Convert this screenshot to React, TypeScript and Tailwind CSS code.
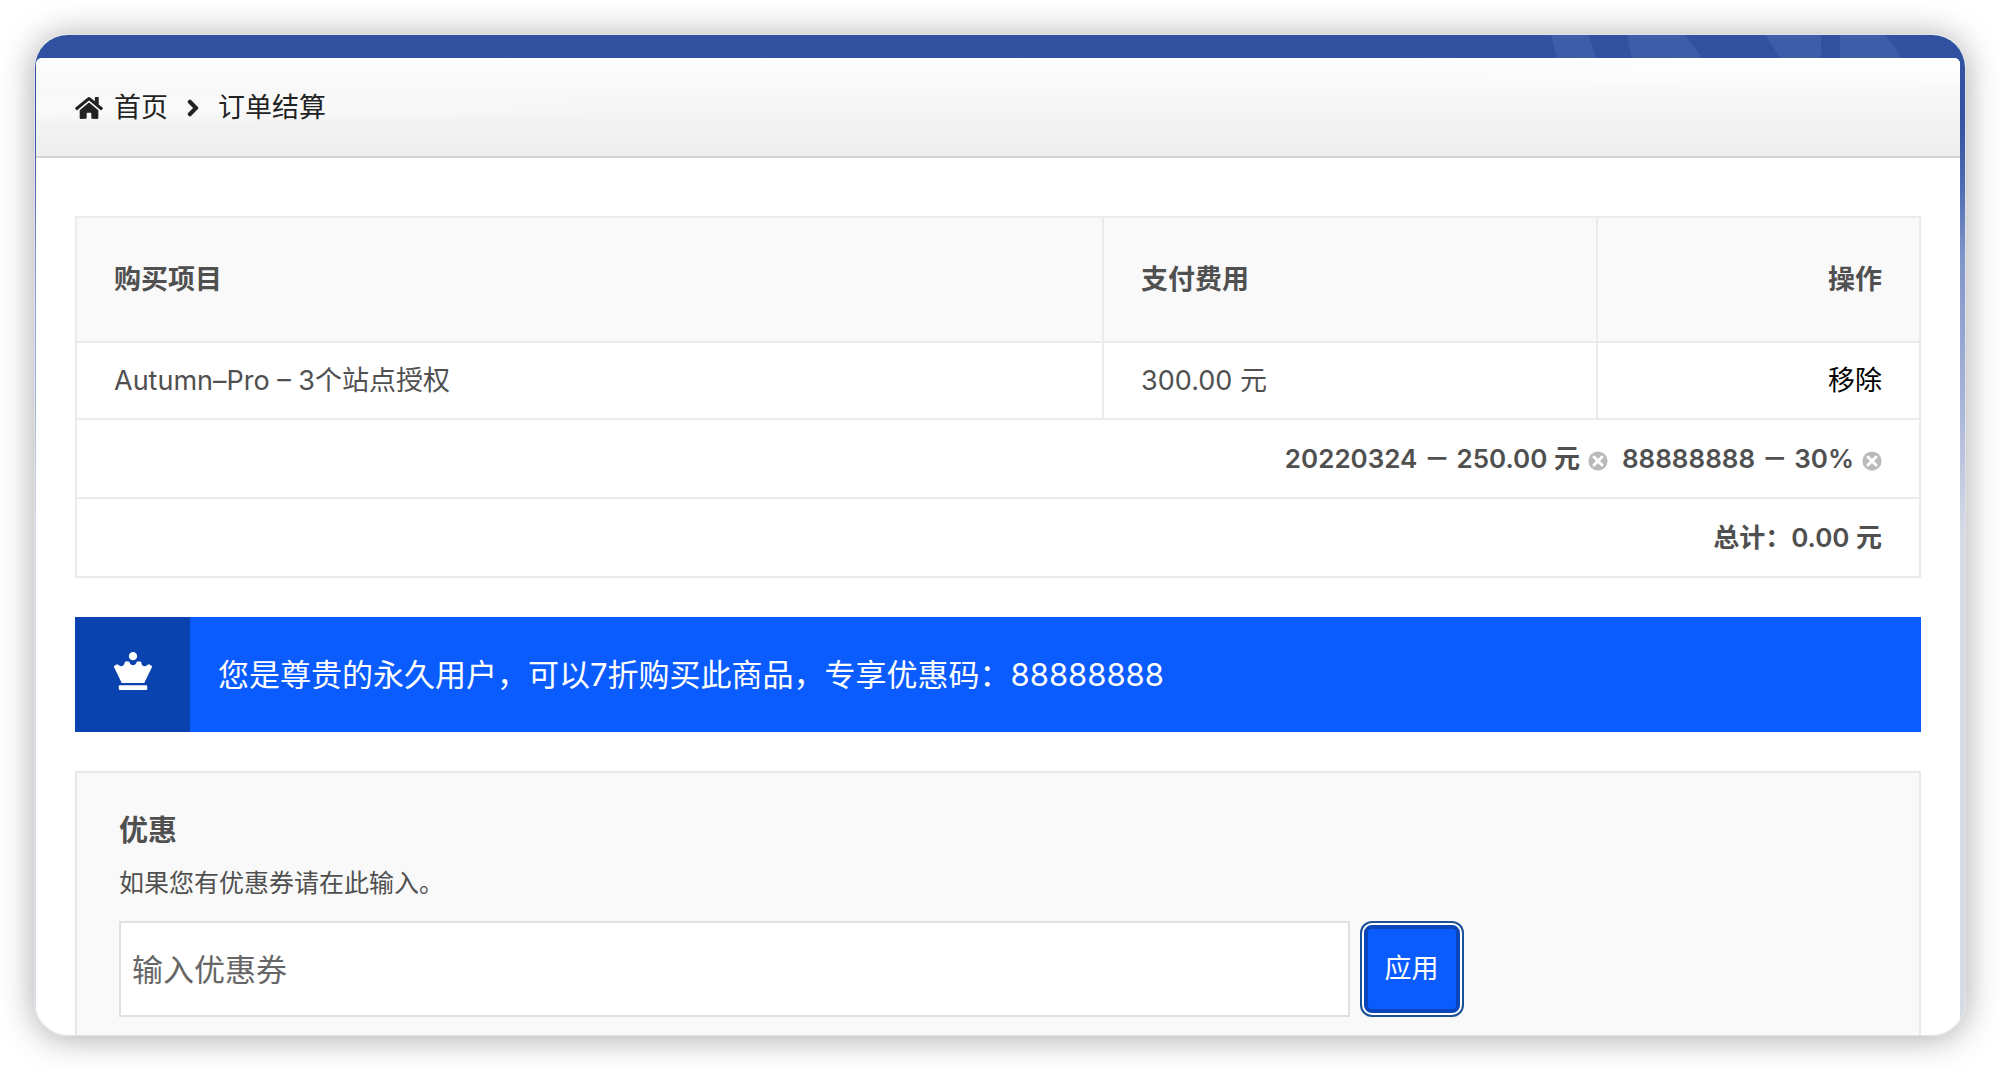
import { useState } from "react";
import { FaChessQueen, FaChevronRight, FaHome } from "react-icons/fa";

const cellClass = "border-2 border-[#ebebeb] px-[37px]";

const items = [{ id: 1, name: "Autumn–Pro – 3个站点授权", price: "300.00 元" }];

const initialDiscounts = [
  { code: "20220324", amount: "250.00 元" },
  { code: "88888888", amount: "30%" },
];

function RemoveIcon() {
  return (
    <svg viewBox="0 0 20 20" className="size-5" aria-hidden="true">
      <circle cx="10" cy="10" r="9.6" fill="#bababa" />
      <path d="M6 6l8 8M14 6l-8 8" stroke="#fff" strokeWidth="3" strokeLinecap="round" />
    </svg>
  );
}

// Faint slanted shapes on the right side of the blue header strip.
function HeaderPattern() {
  return (
    <svg viewBox="0 0 360 24" className="h-6 w-[360px]" fill="#3e5ca8" aria-hidden="true">
      <path d="M0 0h38l7 24H6z" />
      <path d="M76 0h58l18 24H81z" />
      <path d="M214 0h56v24h-40z" />
      <path d="M289 0h46l16 24h-62z" />
    </svg>
  );
}

export default function App() {
  const [discounts, setDiscounts] = useState(initialDiscounts);
  const [coupon, setCoupon] = useState("");

  const removeDiscount = (code: string) => {
    setDiscounts(discounts.filter((d) => d.code !== code));
  };

  return (
    <div className="h-screen bg-white p-[34px] text-[27px] leading-[40px] text-[#505050] [font-family:Inter,'Noto_Sans_CJK_SC',sans-serif]">
      <div className="relative h-full overflow-hidden rounded-[34px] border border-[#dfe2e8] bg-[linear-gradient(#30519f_0px,#3555a3_90px,#5270b4_160px,#7f94c8_220px,#a9b5d8_370px,#d6dbe6_500px)] pt-[23px] pr-[5px] pl-px shadow-[0_2px_34px_rgba(0,0,0,0.34)]">
        <div className="absolute top-0 right-[54px]">
          <HeaderPattern />
        </div>

        <main className="relative min-h-full rounded-t-md bg-white">
          <nav
            aria-label="面包屑"
            className="flex h-[100px] items-center rounded-t-md border-b-2 border-[#d3d3d3] bg-[radial-gradient(ellipse_at_top_right,white,transparent_25%),radial-gradient(ellipse_at_left,rgba(255,255,255,0.6),transparent_25%),linear-gradient(#fdfdfd,#eeeeee)] px-[39px] pt-0.5 text-[#222]"
          >
            <a href="#" className="flex items-center gap-[11px]">
              <FaHome className="size-7" />
              首页
            </a>
            <FaChevronRight className="mr-4 ml-4 size-[18px] stroke-current stroke-[40px]" />
            <span>订单结算</span>
          </nav>

          <div className="px-[39px] pt-[58px]">
            <table className="w-full table-fixed border-collapse">
              <colgroup>
                <col className="w-[55.7%]" />
                <col className="w-[26.8%]" />
                <col className="w-[17.5%]" />
              </colgroup>
              <thead>
                <tr className="h-[125px] bg-[#f9f9f9]">
                  <th className={`${cellClass} text-left`}>购买项目</th>
                  <th className={`${cellClass} text-left`}>支付费用</th>
                  <th className={`${cellClass} text-right`}>操作</th>
                </tr>
              </thead>
              <tbody>
                {items.map((item) => (
                  <tr key={item.id} className="h-[77px]">
                    <td className={cellClass}>{item.name}</td>
                    <td className={cellClass}>{item.price}</td>
                    <td className={`${cellClass} text-right`}>
                      <a href="#" className="text-black">移除</a>
                    </td>
                  </tr>
                ))}
              </tbody>
              <tfoot className="font-semibold">
                <tr className="h-[79px]">
                  <td colSpan={3} className={`${cellClass} text-[26px]`}>
                    <div className="flex justify-end gap-3.5">
                      {discounts.map((d) => (
                        <span key={d.code} className="flex items-center gap-2">
                          {d.code} － {d.amount}
                          <button
                            type="button"
                            aria-label={`移除 ${d.code}`}
                            onClick={() => removeDiscount(d.code)}
                            className="pt-1"
                          >
                            <RemoveIcon />
                          </button>
                        </span>
                      ))}
                    </div>
                  </td>
                </tr>
                <tr className="h-[79px]">
                  <td colSpan={3} className={`${cellClass} text-right text-[26px]`}>总计：0.00 元</td>
                </tr>
              </tfoot>
            </table>

            <div className="mt-[39px] flex h-[115px] items-center bg-[#0b5cff] text-[31px] text-white">
              <div className="flex h-full w-[115px] shrink-0 items-center justify-center bg-[#0a43b0]">
                <FaChessQueen className="mb-2 size-[38px]" />
              </div>
              <p className="pl-7">您是尊贵的永久用户，可以7折购买此商品，专享优惠码：88888888</p>
            </div>

            <section className="mt-[39px] border-2 border-[#e8e8e8] bg-[#f9f9f9] px-[42px] pt-9 pb-12">
              <h2 className="text-[29px] leading-[44px] font-bold">优惠</h2>
              <label htmlFor="coupon" className="mt-3 block text-[25px] leading-9">
                如果您有优惠券请在此输入。
              </label>
              <form className="mt-5 flex items-center gap-3.5" onSubmit={(e) => e.preventDefault()}>
                <input
                  id="coupon"
                  type="text"
                  value={coupon}
                  onChange={(e) => setCoupon(e.target.value)}
                  placeholder="输入优惠券"
                  className="h-24 w-[70%] border-2 border-[#e0e0e0] bg-white px-[11px] text-[31px] outline-none placeholder:text-[#666]"
                />
                <button
                  type="submit"
                  className="h-[88px] w-24 rounded-lg border-4 border-[#0a45ba] bg-[#0b5cff] text-white shadow-[0_0_0_2px_#fff,0_0_0_4px_#1b4f96]"
                >
                  应用
                </button>
              </form>
            </section>
          </div>
        </main>
      </div>
    </div>
  );
}
